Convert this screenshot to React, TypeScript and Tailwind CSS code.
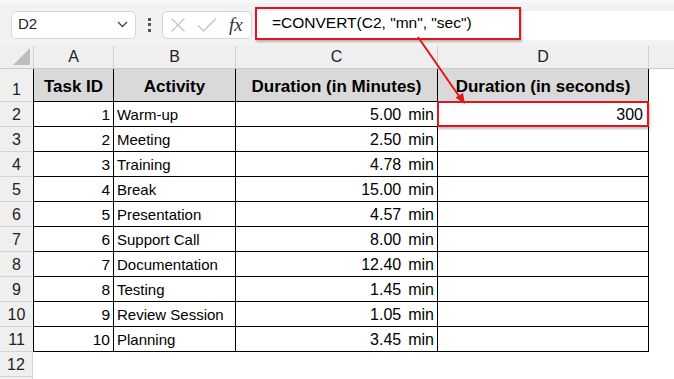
import React from "react";

const ROWS: [number, string, string][] = [
  [1, "Warm-up", "5.00"],
  [2, "Meeting", "2.50"],
  [3, "Training", "4.78"],
  [4, "Break", "15.00"],
  [5, "Presentation", "4.57"],
  [6, "Support Call", "8.00"],
  [7, "Documentation", "12.40"],
  [8, "Testing", "1.45"],
  [9, "Review Session", "1.05"],
  [10, "Planning", "3.45"],
];

const font = { fontFamily: '"Liberation Sans", Arial, sans-serif' };

function NameBox() {
  return (
    <div className="ml-[11px] flex h-[28px] w-[125px] items-center justify-between rounded-[5px] border border-[#d6d6d6] bg-white pl-[6px] pr-[7px] text-[15px] text-[#222]">
      <span>D2</span>
      <svg width="11" height="7" viewBox="0 0 11 7">
        <path d="M1 1l4.5 4.5L10 1" fill="none" stroke="#444" strokeWidth="1.3" />
      </svg>
    </div>
  );
}

function FxBox() {
  return (
    <div className="flex h-[28px] w-[90px] items-center rounded-[5px] border border-[#d6d6d6] bg-white pl-[7px]">
      <svg width="16" height="16" viewBox="0 0 16 16">
        <path d="M1.5 1.5l13 13M14.5 1.5l-13 13" stroke="#c4c4c4" strokeWidth="1.3" />
      </svg>
      <svg width="20" height="16" viewBox="0 0 20 16" className="ml-[11px]">
        <path d="M1 8.5l5.5 5.5L19 1.5" fill="none" stroke="#c4c4c4" strokeWidth="1.3" />
      </svg>
      <span
        className="ml-[12px] text-[19px] italic leading-none text-[#333]"
        style={{ fontFamily: '"Liberation Serif", "Times New Roman", serif' }}
      >
        fx
      </span>
    </div>
  );
}

function Toolbar() {
  return (
    <div className="flex h-[46px] items-center border-t-[3px] border-[#f8f8f8] bg-[#f2f2f2]">
      <NameBox />
      <div className="mx-[10px] flex w-[6px] flex-col items-center gap-[2.5px]">
        <span className="h-[3px] w-[3px] bg-[#555]" />
        <span className="h-[3px] w-[3px] bg-[#555]" />
        <span className="h-[3px] w-[3px] bg-[#555]" />
      </div>
      <FxBox />
      <div className="ml-[3px] mt-[1px] flex h-[29px] flex-1 items-stretch bg-white">
        <div className="-mt-[4px] flex h-[33px] w-[266px] items-center border-2 border-[#e3141b] pl-[15px] text-[15.5px] text-black shadow-[1px_2px_2px_rgba(0,0,0,0.25)]">
          =CONVERT(C2, "mn", "sec")
        </div>
      </div>
    </div>
  );
}

function ColumnHeaders() {
  const cols = [
    { l: "A", w: "w-[80px]" },
    { l: "B", w: "w-[122px]" },
    { l: "C", w: "w-[202px]" },
    { l: "D", w: "w-[211px]" },
  ];
  return (
    <div className="flex h-[23px] border-b border-[#c9c9c9] bg-[#efefef] text-[16px] text-[#222]">
      <div className="relative w-[34px] border-r border-[#cfcfcf]">
        <svg width="17" height="17" viewBox="0 0 17 17" className="absolute bottom-[3px] right-[3px]">
          <path d="M17 0V17H0Z" fill="#bdbdbd" />
        </svg>
      </div>
      {cols.map((c) => (
        <div key={c.l} className={`${c.w} flex items-center justify-center border-r border-[#cfcfcf]`}>
          {c.l}
        </div>
      ))}
      <div className="flex-1" />
    </div>
  );
}

function RowHead({ n, h, edge = true }: { n?: number; h: string; edge?: boolean }) {
  return (
    <div
      className={`${h} flex w-[33px] items-end justify-center border-b border-[#d4d4d4] bg-[#efefef] pb-[2px] text-[16px] leading-[18px] text-[#222] ${edge ? "border-r" : ""}`}
    >
      {n}
    </div>
  );
}

export default function App() {
  return (
    <div className="relative h-[379px] w-[674px] overflow-hidden bg-white" style={font}>
      <Toolbar />
      <ColumnHeaders />

      {/* header row */}
      <div className="flex h-[33px]">
        <RowHead n={1} h="h-[33px]" edge={false} />
        {[
          ["Task ID", "w-[81px]"],
          ["Activity", "w-[122px]"],
          ["Duration (in Minutes)", "w-[202px]"],
          ["Duration (in seconds)", "w-[211px]"],
        ].map(([t, w], i) => (
          <div
            key={t}
            className={`${w} flex items-center justify-center border-b border-r border-black bg-[#d9d9d9] pt-[3px] text-[17px] font-bold text-black ${i === 0 ? "border-l" : ""}`}
          >
            {t}
          </div>
        ))}
      </div>

      {ROWS.map(([id, act, dur], i) => (
        <div key={id} className="flex h-[25px] leading-[18px] text-black">
          <RowHead n={i + 2} h="h-[25px]" edge={false} />
          <div className="flex w-[81px] items-end justify-end border-b border-l border-r border-black pb-[2px] pr-[3px] text-[15.5px]">
            {id}
          </div>
          <div className="flex w-[122px] items-end border-b border-r border-black pb-[2px] pl-[3px] text-[15px]">{act}</div>
          <div className="flex w-[202px] items-end justify-end border-b border-r border-black pb-[2px] pr-[3px] text-[16px]">
            {dur}
            <span className="ml-[7px]">min</span>
          </div>
          <div className="relative flex w-[211px] items-end justify-end border-b border-r border-black pb-[2px] pr-[5px] text-[16px]">
            {i === 0 && (
              <>
                <div className="absolute -left-px -top-px h-[26px] w-[212px] border-2 border-[#e3141b] shadow-[1px_2px_2px_rgba(0,0,0,0.25)]" />
                <span className="relative">300</span>
              </>
            )}
          </div>
        </div>
      ))}

      <div className="flex h-[25px]">
        <RowHead n={12} h="h-[25px]" />
      </div>
      <div className="flex h-[25px]">
        <RowHead h="h-[25px]" />
      </div>

      <svg className="pointer-events-none absolute left-0 top-0" width="674" height="379">
        <line x1="418" y1="37" x2="461" y2="99" stroke="#e3141b" strokeWidth="2" />
        <path d="M465 104L455.5 97.5L463 93Z" fill="#e3141b" />
      </svg>
    </div>
  );
}
